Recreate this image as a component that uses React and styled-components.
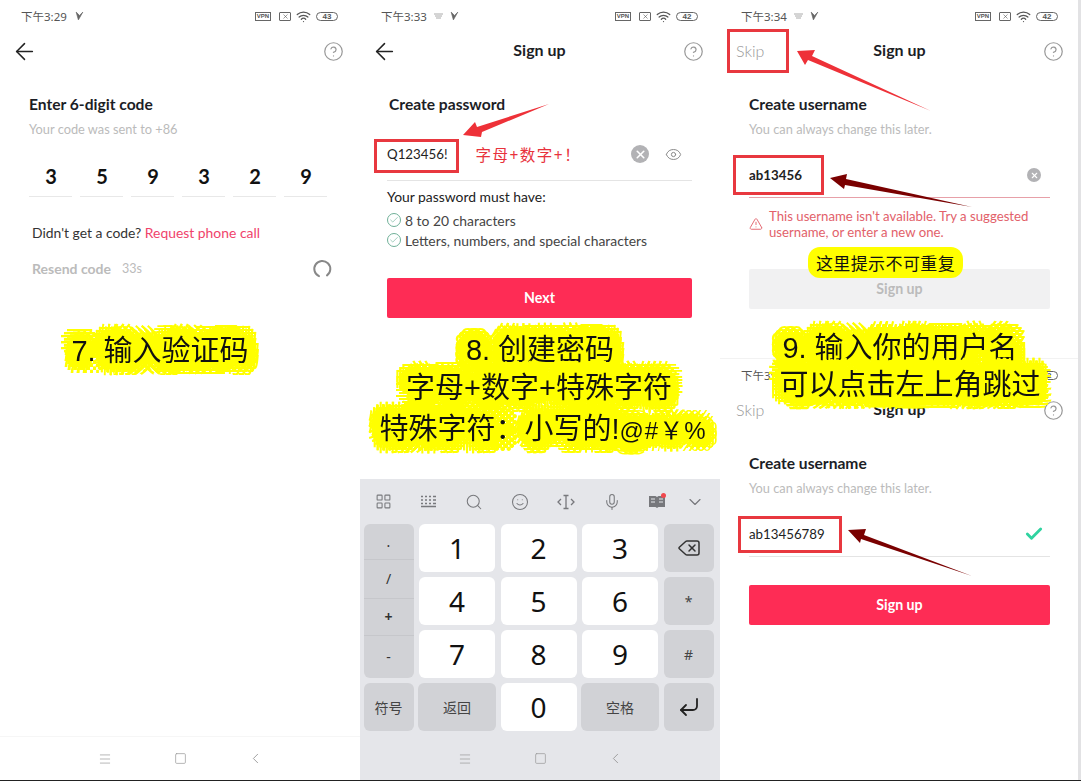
import React from "react"
import styled, { createGlobalStyle } from "styled-components"
import {
  ArrowLeft,
  Check,
  ChevronDown,
  ChevronLeft,
  CircleHelp,
  CornerDownLeft,
  Delete,
  Eye,
  LayoutGrid,
  Menu,
  Mic,
  Search,
  Smile,
  Square,
  TriangleAlert,
  Wifi,
  X,
} from "lucide-react"

const latin = `Lato, "Noto Sans CJK SC", sans-serif`
const cjk = `"Noto Sans", "Noto Sans CJK SC", sans-serif`

// chained shadows grow the glyphs into the yellow marker blob round the captions
const blob = [
  [6, 0],
  [-6, 0],
  [0, 6],
  [0, -6],
  [3, 3],
  [-3, -3],
  [3, -3],
  [-3, 3],
]
  .map(([x, y]) => `drop-shadow(${x}px ${y}px 0.4px #ffff00)`)
  .join(" ")

const GlobalStyle = createGlobalStyle`
  html, body {
    margin: 0;
    padding: 0;
    background: #fff;
  }
`

const Page = styled.div`
  position: relative;
  display: flex;
  width: 1081px;
  height: 781px;
  overflow: hidden;
  box-sizing: border-box;
  border-bottom: 1px solid #222;
  background: #fff;
  font-family: ${latin};
  color: #1c1e26;
`

const Panel = styled.div`
  display: flex;
  flex-direction: column;
  flex: none;
  width: 360px;
  height: 780px;
`

const EdgeStrip = styled.div`
  position: absolute;
  right: 0;
  top: 0;
  bottom: 0;
  width: 3px;
  background: #e2e2e4;
`

const Screen = styled.div`
  height: 359px;
  flex: none;
  box-sizing: border-box;
  border-top: ${(p) => (p.$divided ? "1px solid #f2f2f2" : "none")};
  margin-top: ${(p) => (p.$divided ? "-1px" : "0")};
`

const StatusBar = styled.div`
  display: flex;
  align-items: center;
  height: 32px;
  padding: 0 22px 0 21px;
  color: #555;
  font-family: ${cjk};
  font-size: 11.5px;
`

const StatusGlyph = styled.svg`
  margin-left: ${(p) => p.$gap || 6}px;
`

const StatusRight = styled.div`
  display: flex;
  align-items: center;
  margin-left: auto;
  color: #555;
`

const VpnTag = styled.span`
  box-sizing: border-box;
  width: 16px;
  height: 9px;
  border: 1px solid #666;
  font: 700 6px/7px "Liberation Sans", sans-serif;
  text-align: center;
`

const SimTag = styled.span`
  display: flex;
  align-items: center;
  justify-content: center;
  box-sizing: border-box;
  width: 12px;
  height: 9px;
  margin-left: 8px;
  border: 1px solid #666;
  border-radius: 1px;
`

const WifiIcon = styled(Wifi)`
  margin-left: 5px;
`

const Battery = styled.span`
  box-sizing: border-box;
  width: 22px;
  height: 9px;
  margin-left: 5px;
  border: 1px solid #666;
  border-radius: 5px;
  font: 700 8px/7px "Liberation Sans", sans-serif;
  text-align: center;
`

const Header = styled.div`
  display: flex;
  align-items: center;
  justify-content: space-between;
  height: 38px;
  padding: 0 16px;
`

const HeaderSlot = styled.div`
  display: flex;
  align-items: center;
  width: 60px;
  justify-content: ${(p) => (p.$end ? "flex-end" : "flex-start")};
`

const BackIcon = styled(ArrowLeft)`
  margin-left: -5px;
  color: #222;
`

const HelpIcon = styled(CircleHelp)`
  color: #999;
`

const HeaderTitle = styled.div`
  padding: 0 1px 4px 0;
  font-size: 16px;
  font-weight: 700;
`

const SkipLabel = styled.span`
  padding-bottom: 2px;
  font-size: 16px;
  font-weight: 300;
  color: #999;
`

const Content = styled.div`
  padding: 0 ${(p) => p.$right || 30}px 0 ${(p) => p.$left || 29}px;
`

const Heading = styled.h2`
  margin: 24px 0 0;
  padding-left: ${(p) => p.$indent || 0}px;
  font-size: 15.6px;
  line-height: 20px;
  font-weight: 700;
`

const Subtle = styled.p`
  margin: 7px 0 0;
  font-size: 12.8px;
  line-height: 16px;
  color: #bbb;
`

const CodeRow = styled.div`
  display: grid;
  grid-template-columns: repeat(6, 43px);
  gap: 8px;
  margin-top: 21px;
`

const CodeCell = styled.div`
  height: 38px;
  padding-left: 1px;
  box-sizing: content-box;
  width: 42px;
  border-bottom: 1px solid #e8e8e8;
  font-size: 20px;
  font-weight: 700;
  line-height: 37px;
  text-align: center;
  color: #111;
`

const HelpLine = styled.div`
  margin-top: 27px;
  padding-left: 3px;
  font-size: 13.9px;
  line-height: 18px;
  color: #333;
`

const Accent = styled.span`
  color: #f0436b;
`

const ResendRow = styled.div`
  display: flex;
  align-items: center;
  margin-top: 17px;
  padding-left: 3px;
  font-size: 12.5px;
  line-height: 18px;
  color: #bbb;
`

const ResendLabel = styled.span`
  width: 90px;
  font-size: 14px;
  font-weight: 700;
`

const Spinner = styled.svg`
  margin-left: auto;
  margin-right: -2px;
`

const InputRow = styled.div`
  display: flex;
  align-items: center;
  box-sizing: border-box;
  height: ${(p) => p.$height}px;
  margin-top: ${(p) => p.$top}px;
  border-bottom: 1px solid ${(p) => (p.$error ? "#e7a0a8" : "#e4e4e4")};
`

const InputValue = styled.span`
  font-size: 13.3px;
  font-weight: ${(p) => (p.$strong ? 700 : 400)};
  color: #222;
`

const HintRed = styled.span`
  margin-left: 28px;
  font-family: ${cjk};
  font-size: 15.5px;
  letter-spacing: 1.5px;
  color: #e8323c;
`

const ClearDot = styled.span`
  display: flex;
  align-items: center;
  justify-content: center;
  flex: none;
  width: ${(p) => p.$size}px;
  height: ${(p) => p.$size}px;
  margin-left: ${(p) => (p.$push ? "auto" : "0")};
  margin-right: ${(p) => p.$right || 0}px;
  border-radius: 50%;
  background: #b2b2b5;
  color: #fff;
`

const EyeSlot = styled.span`
  display: flex;
  margin-left: 16px;
  margin-right: 10px;
  color: #888;
`

const RuleTitle = styled.div`
  margin-top: 7px;
  font-size: 13.9px;
  line-height: 18px;
  color: #222;
`

const RuleList = styled.ul`
  margin: 4px 0 0;
  padding: 0;
  list-style: none;
`

const Rule = styled.li`
  display: flex;
  align-items: center;
  gap: 4px;
  height: 20px;
  font-size: 13.9px;
  color: #444;
`

const RuleTick = styled.span`
  display: flex;
  align-items: center;
  justify-content: center;
  flex: none;
  box-sizing: border-box;
  width: 14px;
  height: 14px;
  border: 1px solid #6fb098;
  border-radius: 50%;
  color: #6fb098;
`

const SubmitButton = styled.div`
  height: 40px;
  margin-top: ${(p) => p.$top}px;
  border-radius: 2px;
  background: ${(p) => (p.$disabled ? "#f1f1f2" : "#fe2c55")};
  color: ${(p) => (p.$disabled ? "#bbb" : "#fff")};
  font-size: 14.2px;
  font-weight: 700;
  line-height: 39px;
  text-align: center;
`

const ErrorRow = styled.div`
  display: flex;
  align-items: center;
  gap: 6px;
  margin-top: 10px;
  font-size: 13.2px;
  line-height: 16px;
  color: #e2616a;
`

const OkMark = styled.span`
  display: flex;
  margin-left: auto;
  margin-right: 6px;
  color: #2fd3a0;
`

const Keyboard = styled.div`
  margin-top: auto;
  background: #e5e6ea;
`

const KeyToolbar = styled.div`
  display: grid;
  grid-template-columns: 44px 46px 46px 46px 46px 46px 44px 32px;
  align-items: center;
  justify-items: center;
  height: 45px;
  padding-left: 1px;
  color: #77787c;
`

const BookIcon = styled.span`
  position: relative;
  display: flex;
`

const RedDot = styled.span`
  position: absolute;
  top: -2px;
  right: -1px;
  width: 5px;
  height: 5px;
  border-radius: 50%;
  background: #f0484e;
`

const KeyGrid = styled.div`
  display: grid;
  grid-template-columns: 50px 76px 76px 76px 50px;
  grid-auto-rows: 48px;
  gap: 5px 5.5px;
  padding-left: 3.5px;
`

const Key = styled.div`
  display: flex;
  align-items: center;
  justify-content: center;
  margin: ${(p) => (p.$wide ? "0 -1px" : "0")};
  border-radius: 6px;
  background: ${(p) => (p.$dark ? "#d1d2d6" : "#fff")};
  color: ${(p) => (p.$small ? "#444" : "#111")};
  font-family: ${cjk};
  font-size: ${(p) => (p.$small ? 14 : 28)}px;
`

const SymbolStack = styled.div`
  grid-row: span 3;
  display: flex;
  flex-direction: column;
  overflow: hidden;
  border-radius: 6px;
  background: #d1d2d6;
`

const SymbolCell = styled.div`
  flex: ${(p) => p.$share} 0 0;
  display: flex;
  align-items: center;
  justify-content: center;
  border-top: ${(p) => (p.$first ? "none" : "1px solid #c6c7cb")};
  font-family: ${cjk};
  font-size: 14px;
  font-weight: ${(p) => (p.$bold ? 700 : 400)};
  color: #333;
`

const NavBar = styled.div`
  display: grid;
  grid-template-columns: repeat(3, 75px);
  justify-content: center;
  justify-items: center;
  align-items: center;
  height: 43px;
  margin-top: ${(p) => (p.$flush ? "6px" : "auto")};
  border-top: ${(p) => (p.$flush ? "none" : "1px solid #f6f6f6")};
  color: #999;
`

// everything below lies over the screenshots: hand drawn markers
const MarkBox = styled.div`
  position: absolute;
  box-sizing: border-box;
  left: ${(p) => p.$x}px;
  top: ${(p) => p.$y}px;
  width: ${(p) => p.$w}px;
  height: ${(p) => p.$h}px;
  border: 3px solid #e8383f;
`

const Caption = styled.div`
  position: absolute;
  left: ${(p) => p.$cx}px;
  top: ${(p) => p.$cy}px;
  transform: translate(-50%, -50%);
  font-family: "Liberation Sans", "Noto Sans CJK SC", sans-serif;
  font-size: 29px;
  line-height: 1;
  white-space: nowrap;
  color: #111;
  filter: ${blob};
`

const SmallSymbols = styled.span`
  font-size: 24px;
  letter-spacing: 1px;
`

const NoteTag = styled.div`
  position: absolute;
  left: 808px;
  top: 247px;
  display: flex;
  align-items: center;
  justify-content: center;
  width: 155px;
  height: 31px;
  border-radius: 12px;
  background: #ffff00;
  font-family: "Noto Sans CJK SC", sans-serif;
  font-size: 17px;
  letter-spacing: 0.4px;
  color: #111;
`

const ArrowLayer = styled.svg`
  position: absolute;
  left: 0;
  top: 0;
  pointer-events: none;
`

const code = ["3", "5", "9", "3", "2", "9"]

const Status = ({ time, extra, battery }) => (
  <StatusBar>
    {time}
    {extra && (
      <StatusGlyph $gap={7} width="9" height="6" viewBox="0 0 9 6">
        <path d="M0 1h9M1 3h7M2 5h5" stroke="#aaa" fill="none" />
      </StatusGlyph>
    )}
    <StatusGlyph $gap={extra ? 7 : 8} width="9" height="10" viewBox="0 0 8 9">
      <path d="M1 1l2 7 4-7-3 3z" fill="#666" stroke="#666" strokeWidth=".6" />
    </StatusGlyph>
    <StatusRight>
      <VpnTag>VPN</VpnTag>
      <SimTag>
        <X size={7} strokeWidth={2} />
      </SimTag>
      <WifiIcon size={15} strokeWidth={2} />
      <Battery>{battery}</Battery>
    </StatusRight>
  </StatusBar>
)

const TopBar = ({ title, skip }) => (
  <Header>
    <HeaderSlot>
      {skip ? <SkipLabel>Skip</SkipLabel> : <BackIcon size={27} strokeWidth={1.35} />}
    </HeaderSlot>
    {title && <HeaderTitle>{title}</HeaderTitle>}
    <HeaderSlot $end>
      <HelpIcon size={21} strokeWidth={1.4} />
    </HeaderSlot>
  </Header>
)

const Nav = ({ flush }) => (
  <NavBar $flush={flush}>
    <Menu size={14} strokeWidth={1.2} />
    <Square size={13} strokeWidth={1.3} />
    <ChevronLeft size={17} strokeWidth={1.3} />
  </NavBar>
)

const Rows = () => (
  <>
    <SymbolStack>
      <SymbolCell $first $share={36}>.</SymbolCell>
      <SymbolCell $share={38}>/</SymbolCell>
      <SymbolCell $share={37} $bold>+</SymbolCell>
      <SymbolCell $share={43}>-</SymbolCell>
    </SymbolStack>
    <Key>1</Key>
    <Key>2</Key>
    <Key>3</Key>
    <Key $dark>
      <Delete size={24} strokeWidth={1.5} color="#333" />
    </Key>
    <Key>4</Key>
    <Key>5</Key>
    <Key>6</Key>
    <Key $dark $small>*</Key>
    <Key>7</Key>
    <Key>8</Key>
    <Key>9</Key>
    <Key $dark $small>#</Key>
    <Key $dark $small>符号</Key>
    <Key $dark $small $wide>返回</Key>
    <Key>0</Key>
    <Key $dark $small $wide>空格</Key>
    <Key $dark>
      <CornerDownLeft size={24} strokeWidth={1.8} color="#222" />
    </Key>
  </>
)

const UsernameIntro = () => (
  <>
    <Heading>Create username</Heading>
    <Subtle>You can always change this later.</Subtle>
  </>
)

const App = () => (
  <Page>
    <GlobalStyle />

    <Panel>
      <Status time="下午3:29" battery="43" />
      <TopBar />
      <Content>
        <Heading>Enter 6-digit code</Heading>
        <Subtle>Your code was sent to +86</Subtle>
        <CodeRow>
          {code.map((digit, index) => (
            <CodeCell key={index}>{digit}</CodeCell>
          ))}
        </CodeRow>
        <HelpLine>
          Didn't get a code? <Accent>Request phone call</Accent>
        </HelpLine>
        <ResendRow>
          <ResendLabel>Resend code</ResendLabel>
          33s
          <Spinner width="20" height="20" viewBox="0 0 20 20">
            <path d="M7 17.2A8 8 0 1 1 15 16.4" fill="none" stroke="#888" strokeWidth="2" strokeLinecap="round" />
          </Spinner>
        </ResendRow>
      </Content>
      <Nav />
    </Panel>

    <Panel>
      <Status time="下午3:33" battery="42" extra />
      <TopBar title="Sign up" />
      <Content $left={27} $right={28}>
        <Heading $indent={2}>Create password</Heading>
        <InputRow $height={53} $top={14}>
          <InputValue>Q123456!</InputValue>
          <HintRed>字母+数字+！</HintRed>
          <ClearDot $size={18} $push>
            <X size={13} strokeWidth={3} />
          </ClearDot>
          <EyeSlot>
            <Eye size={17} strokeWidth={1.4} />
          </EyeSlot>
        </InputRow>
        <RuleTitle>Your password must have:</RuleTitle>
        <RuleList>
          {["8 to 20 characters", "Letters, numbers, and special characters"].map((rule) => (
            <Rule key={rule}>
              <RuleTick>
                <Check size={10} strokeWidth={1.5} />
              </RuleTick>
              {rule}
            </Rule>
          ))}
        </RuleList>
        <SubmitButton $top={28}>Next</SubmitButton>
      </Content>
      <Keyboard>
        <KeyToolbar>
          <LayoutGrid size={17} strokeWidth={1.5} />
          <svg width="17" height="13" viewBox="0 0 17 13">
            <path d="M1 1.5h2M5 1.5h2M9 1.5h2M13 1.5h3M1 5h2M5 5h2M9 5h2M13 5h3M1 8.5h2M5 8.5h2M9 8.5h2M13 8.5h3M1 11.5h15" stroke="currentColor" strokeWidth="1.6" />
          </svg>
          <Search size={18} strokeWidth={1.4} />
          <Smile size={18} strokeWidth={1.4} />
          <svg width="18" height="16" viewBox="0 0 18 16">
            <path d="M4 5L1 8l3 3M14 5l3 3-3 3M6.5 1.5h5M6.5 14.5h5M9 1.5v13" fill="none" stroke="currentColor" strokeWidth="1.3" />
          </svg>
          <Mic size={18} strokeWidth={1.4} />
          <BookIcon>
            <svg width="16" height="14" viewBox="0 0 16 14">
              <path d="M0 1h6.5l1.5 1 1.5-1H16v11H9.5L8 13l-1.5-1H0z" fill="currentColor" />
              <path d="M2 4h4M2 7h4M10 4h4M10 7h4" stroke="#e5e6ea" />
            </svg>
            <RedDot />
          </BookIcon>
          <ChevronDown size={20} strokeWidth={1.4} />
        </KeyToolbar>
        <KeyGrid>
          <Rows />
        </KeyGrid>
        <Nav flush />
      </Keyboard>
    </Panel>

    <Panel>
      <Screen>
        <Status time="下午3:34" battery="42" extra />
        <TopBar title="Sign up" skip />
        <Content>
          <UsernameIntro />
          <InputRow $height={45} $top={16} $error>
            <InputValue $strong>ab13456</InputValue>
            <ClearDot $size={14} $push $right={9}>
              <X size={9} strokeWidth={3} />
            </ClearDot>
          </InputRow>
          <ErrorRow>
            <TriangleAlert size={14} strokeWidth={1.6} />
            <span>
              This username isn't available. Try a suggested
              <br />
              username, or enter a new one.
            </span>
          </ErrorRow>
          <SubmitButton $top={29} $disabled>Sign up</SubmitButton>
        </Content>
      </Screen>
      <Screen $divided>
        <Status time="下午3:34" battery="42" extra />
        <TopBar title="Sign up" skip />
        <Content>
          <UsernameIntro />
          <InputRow $height={45} $top={16}>
            <InputValue>ab13456789</InputValue>
            <OkMark>
              <Check size={20} strokeWidth={3.4} />
            </OkMark>
          </InputRow>
          <SubmitButton $top={28}>Sign up</SubmitButton>
        </Content>
      </Screen>
    </Panel>
    <EdgeStrip />

    <ArrowLayer width="1081" height="781" viewBox="0 0 1081 781">
      <polygon points="463,135 475,122 477,127 549,104 482,132 481,137" fill="#ee3138" />
      <polygon points="797,51 815,50 812,56 931,111 808,60 805,65" fill="#ee3138" />
      <polygon points="830,178 847,174 846,179 972,207 845,185 844,189" fill="#7a0000" />
      <polygon points="848,530 866,529 864,535 972,576 861,539 860,543" fill="#7a0000" />
    </ArrowLayer>

    <MarkBox $x={374} $y={139} $w={85} $h={34} />
    <MarkBox $x={727} $y={29} $w={62} $h={44} />
    <MarkBox $x={733} $y={155} $w={91} $h={40} />
    <MarkBox $x={738} $y={516} $w={104} $h={37} />

    <NoteTag>这里提示不可重复</NoteTag>

    <Caption $cx={160} $cy={351}>7. 输入验证码</Caption>
    <Caption $cx={540} $cy={350}>8. 创建密码</Caption>
    <Caption $cx={539} $cy={388}>字母+数字+特殊字符</Caption>
    <Caption $cx={543} $cy={429}>
      特殊字符：小写的!<SmallSymbols>@#￥%</SmallSymbols>
    </Caption>
    <Caption $cx={900} $cy={348}>9. 输入你的用户名</Caption>
    <Caption $cx={910} $cy={385}>可以点击左上角跳过</Caption>
  </Page>
)

export default App
